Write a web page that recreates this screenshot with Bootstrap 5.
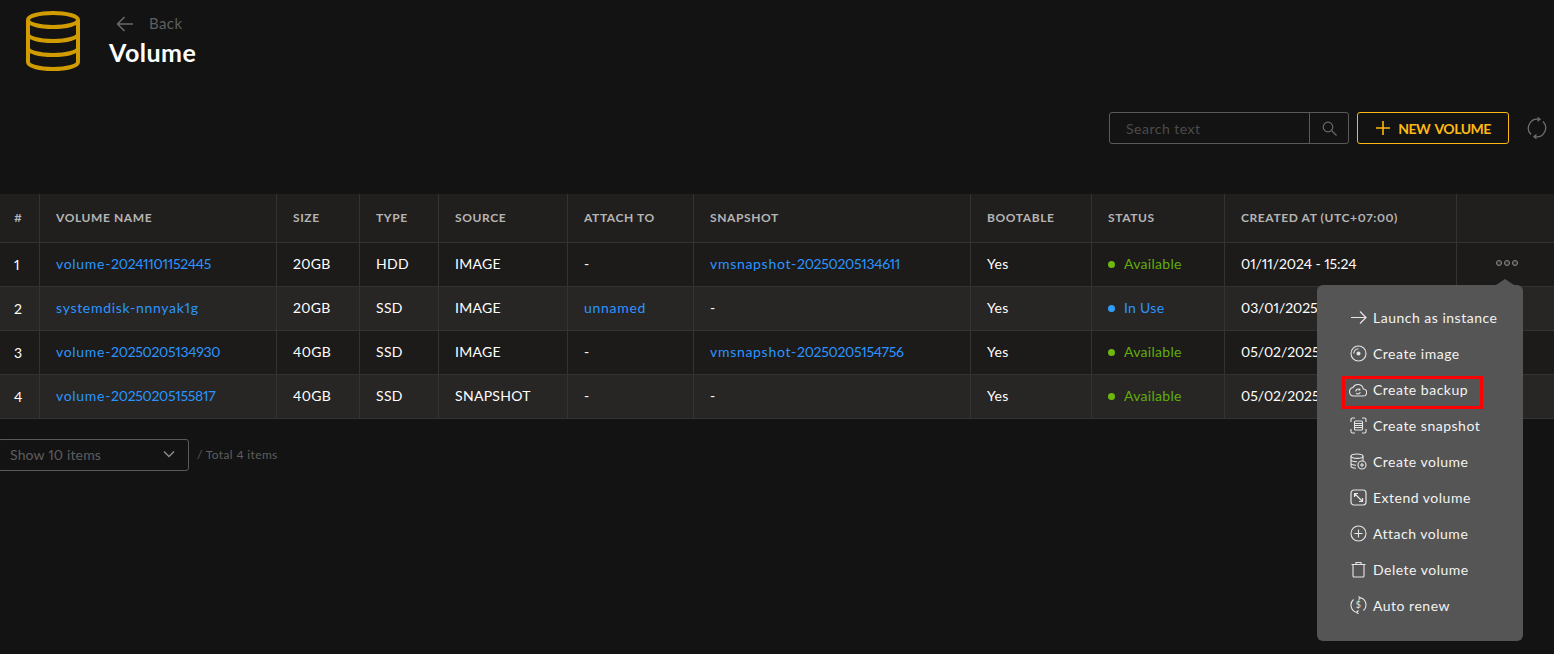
<!doctype html>
<html lang="en">
<head>
<meta charset="utf-8">
<title>Volume</title>
<link rel="stylesheet" href="https://cdn.jsdelivr.net/npm/bootstrap@5.3.0/dist/css/bootstrap.min.css">
<style>
html,body{height:100%;overflow:hidden}
body{background:#131313;color:#fff;font-family:"Lato","Noto Sans",sans-serif;font-size:14px;font-variant-numeric:proportional-nums}
.pg-head{height:194px}
.top-row{padding:11px 0 0 26px;gap:29px}
.back-row{height:25px;margin-left:7px;gap:15px;color:#5e5e5e;font-size:15px;letter-spacing:.4px}
.pg-title{font-size:25px;font-weight:700;line-height:32px;margin:0 0 2px;letter-spacing:.5px}
.tools{padding:0 7px 0 0;margin-top:41px;gap:8px}
.search-box{width:240px;height:32px;border:1px solid #5a5a5a;border-radius:3px}
.search-txt{flex:1;padding-left:16px;color:#4b4b4b;font-size:14px;letter-spacing:.5px}
.search-btn{width:39px;height:100%;border-left:1px solid #5a5a5a}
.new-btn{width:152px;height:32px;border:1px solid #fdb913;border-radius:3px;color:#fdb913;font-size:14px;font-weight:700;gap:7px;padding:0;background:transparent;letter-spacing:-.5px;word-spacing:2px}
.new-btn:hover{color:#fdb913;border-color:#fdb913}
.refresh{margin-left:10px}
.vol-table{table-layout:fixed;width:1554px;margin:0;color:#fff;--bs-table-bg:transparent;--bs-table-color:#fff;border-collapse:separate;border-spacing:0}
.vol-table th{background:#211f1e;color:#b5b5b5;font-size:12px;font-weight:700;letter-spacing:.6px;height:49px;padding:0 16px 1px;border:solid #333;border-width:0 1px 1px 0;vertical-align:middle}
.vol-table td{height:44px;padding:0 16px 2px;border:solid #333;border-width:0 1px 1px 0;vertical-align:middle;font-size:14px;white-space:nowrap;letter-spacing:.3px}
.vol-table th:last-child,.vol-table td:last-child{border-right:0}
.vol-table tbody tr:nth-child(odd) td{background:#1c1b1a}
.vol-table tbody tr:nth-child(even) td{background:#272625}
.vol-table .date-cell{letter-spacing:-.08px}
.c1{width:40px}.c2{width:237px}.c3{width:83px}.c4{width:79px}.c5{width:129px}.c6{width:126px}.c7{width:277px}.c8{width:121px}.c9{width:133px}.c10{width:232px}.c11{width:97px}
.vol-table .num-cell{padding:0 0 1px 14px}
.vlink{color:#2b95ff;text-decoration:none;letter-spacing:.7px}
.dg{letter-spacing:-.3px}
.st-ok{color:#60ae0a}.st-use{color:#2b95ff}
.dotmark{display:inline-block;width:7px;height:7px;border-radius:50%;margin-right:9px;vertical-align:1px}
.dot-ok{background:#6fb80d}.dot-use{background:#2f9dfb}
.more-cell{position:relative;overflow:visible}
.more-dots{position:absolute;left:39px;top:17px;display:flex;gap:2px}
.more-dots i{width:6px;height:6px;border:1px solid #8b8b8b;border-radius:50%;display:block;box-shadow:inset 0 0 0 1px #8b8b8b55}
.act-menu{position:absolute;left:-140px;top:42px;width:206px;height:356px;background:#555;border-radius:6px;padding:14px 0 0 33px;z-index:5}
.act-menu::before{content:"";position:absolute;left:179px;top:-6px;border:solid transparent;border-width:0 9px 6px;border-bottom-color:#555}
.act-item{height:36px;gap:6px;color:#f3f3f3;font-size:14px;letter-spacing:.5px;position:relative}
.act-item svg{flex:none}
.act-item .cloud{margin-left:-1px}
.act-on::after{content:"";position:absolute;left:-8px;top:5px;width:141px;height:33px;border:3px solid #f00}
.foot-row{padding-top:20px;gap:8px}
.size-pick{width:191px;height:32px;margin-left:-2px;border:1px solid #5a5a5a;border-radius:3px;padding:0 13px 2px 11px;color:#5e5e5e;font-size:14px;letter-spacing:.15px}
.total-txt{color:#5e5e5e;font-size:12px;letter-spacing:.35px}
</style>
</head>
<body>
<header class="pg-head">
  <div class="d-flex top-row">
    <svg width="54" height="60" viewBox="0 0 54 60" fill="none" stroke="#d19c00" stroke-width="4"><ellipse cx="27" cy="9" rx="25" ry="7"/><path d="M2 9v42c0 4 11 7 25 7s25-3 25-7V9"/><path d="M2 23c0 4 11 7 25 7s25-3 25-7M2 37c0 4 11 7 25 7s25-3 25-7"/></svg>
    <div>
      <div class="d-flex align-items-center back-row">
        <svg width="18" height="16" viewBox="0 0 18 16" fill="none" stroke="#6a6a6a" stroke-width="1.500"><path d="M17 8H1.500M8.500 1 1.500 8l7 7"/></svg>
        <span>Back</span>
      </div>
      <h1 class="pg-title">Volume</h1>
    </div>
  </div>
  <div class="d-flex justify-content-end align-items-center tools">
    <div class="d-flex align-items-center search-box">
      <span class="search-txt">Search text</span>
      <span class="d-flex align-items-center justify-content-center search-btn">
        <svg width="15" height="15" viewBox="0 0 15 15" fill="none" stroke="#686868" stroke-width="1.200"><circle cx="6" cy="6" r="4.800"/><path d="m9.500 9.500 5 5"/></svg>
      </span>
    </div>
    <button type="button" class="btn d-flex align-items-center justify-content-center new-btn">
      <svg width="16" height="16" viewBox="0 0 16 16" fill="none" stroke="#fdb913" stroke-width="1.600"><path d="M8 1v14M1 8h14"/></svg>
      NEW VOLUME
    </button>
    <svg class="refresh" width="20" height="22" viewBox="0 0 20 22" fill="none" stroke="#6f6f6f" stroke-width="1.300"><path d="M4 17.500A9 9 0 0 1 12 2.300M16 4.500A9 9 0 0 1 8 19.700"/><path d="m10.500 .5 2.500 1.800-2.500 2M9.500 17.500 7 19.700l2.500 2"/></svg>
  </div>
</header>
<table class="table vol-table">
  <colgroup><col class="c1"><col class="c2"><col class="c3"><col class="c4"><col class="c5"><col class="c6"><col class="c7"><col class="c8"><col class="c9"><col class="c10"><col class="c11"></colgroup>
  <thead><tr><th class="num-cell">#</th><th>VOLUME NAME</th><th>SIZE</th><th>TYPE</th><th>SOURCE</th><th>ATTACH TO</th><th>SNAPSHOT</th><th>BOOTABLE</th><th>STATUS</th><th>CREATED AT (UTC+07:00)</th><th></th></tr></thead>
  <tbody>
    <tr><td class="num-cell">1</td><td><a class="vlink" href="#">volume-<span class="dg">20241101152445</span></a></td><td>20GB</td><td>HDD</td><td>IMAGE</td><td>-</td><td><a class="vlink" href="#">vmsnapshot-<span class="dg">20250205134611</span></a></td><td>Yes</td><td class="st-ok"><span class="dotmark dot-ok"></span>Available</td><td class="date-cell">01/11/2024 - 15:24</td>
      <td class="more-cell">
        <div class="more-dots"><i></i><i></i><i></i></div>
        <div class="act-menu">
          <div class="d-flex align-items-center act-item"><svg width="17" height="17" viewBox="0 0 17 17" fill="none" stroke="#e6e6e6" stroke-width="1.200"><path d="M1 8.500h15M10 2.500l6 6-6 6"/></svg><span>Launch as instance</span></div>
          <div class="d-flex align-items-center act-item"><svg width="17" height="17" viewBox="0 0 17 17" fill="none" stroke="#e6e6e6" stroke-width="1.100"><circle cx="8.500" cy="8.500" r="7.500"/><circle cx="8.500" cy="8.500" r="1.500" fill="#e6e6e6"/><path d="M3.800 8.500a4.700 4.700 0 0 1 4.700-4.700"/></svg><span>Create image</span></div>
          <div class="d-flex align-items-center act-item act-on"><svg class="cloud" width="18" height="17" viewBox="0 0 18 17" fill="none" stroke="#e6e6e6" stroke-width="1.100"><path d="M4.500 15h9.500a3.500 3.500 0 0 0 .3-7A5.500 5.500 0 0 0 4 6.500 4.300 4.300 0 0 0 4.500 15z"/><path d="M6.800 10.500a2.300 2.300 0 0 1 4-1.700M11.200 11a2.300 2.300 0 0 1-4 1.200M10.800 7.500v1.500H9.400"/></svg><span>Create backup</span></div>
          <div class="d-flex align-items-center act-item"><svg width="17" height="17" viewBox="0 0 17 17" fill="none" stroke="#e6e6e6" stroke-width="1.100"><path d="M1 5V2.500A1.500 1.500 0 0 1 2.500 1H5M12 1h2.500A1.500 1.500 0 0 1 16 2.500V5M16 12v2.500a1.500 1.500 0 0 1-1.500 1.500H12M5 16H2.500A1.500 1.500 0 0 1 1 14.500V12"/><rect x="4.500" y="4" width="8" height="9" rx="1"/><path d="M4.500 6.500h8M4.500 8.500h8M4.500 10.500h8"/></svg><span>Create snapshot</span></div>
          <div class="d-flex align-items-center act-item"><svg width="17" height="17" viewBox="0 0 17 17" fill="none" stroke="#e6e6e6" stroke-width="1.100"><ellipse cx="7" cy="3.200" rx="6" ry="2.200"/><path d="M1 3.200v9.800c0 1.200 2 2.200 5 2.200M13 3.200v4.800M1 6.500c0 1.200 2.500 2.200 6 2.200M1 10c0 1.200 2 2.200 5 2.200"/><circle cx="12" cy="12" r="4"/><path d="M12 10v4M10 12h4"/></svg><span>Create volume</span></div>
          <div class="d-flex align-items-center act-item"><svg width="17" height="17" viewBox="0 0 17 17" fill="none" stroke="#e6e6e6" stroke-width="1.200"><rect x="1" y="1" width="15" height="15" rx="3"/><path d="M4.500 4.500l8 8M4.500 8V4.500H8M12.500 9v3.500H9"/></svg><span>Extend volume</span></div>
          <div class="d-flex align-items-center act-item"><svg width="17" height="17" viewBox="0 0 17 17" fill="none" stroke="#e6e6e6" stroke-width="1.100"><circle cx="8.500" cy="8.500" r="7.500"/><path d="M8.500 4.500v8M4.500 8.500h8"/></svg><span>Attach volume</span></div>
          <div class="d-flex align-items-center act-item"><svg width="17" height="17" viewBox="0 0 17 17" fill="none" stroke="#e6e6e6" stroke-width="1.100"><path d="M1.500 3.500h14M6 3.500V1.500h5v2M3 3.500v11.500a1 1 0 0 0 1 1h9a1 1 0 0 0 1-1V3.500"/></svg><span>Delete volume</span></div>
          <div class="d-flex align-items-center act-item"><svg width="17" height="18" viewBox="0 0 17 18" fill="none" stroke="#e6e6e6" stroke-width="1.100"><path d="M3.500 3.500a7.500 7.500 0 0 0 3 12.800M13.500 14.500a7.500 7.500 0 0 0-3-12.800M8.500 .5l2 1.500-2 1.500M8.500 14.500l-2 1.800 2 1.500"/><text x="8.500" y="12.200" text-anchor="middle" font-size="9" font-family="Lato" fill="#e6e6e6" stroke="none">$</text></svg><span>Auto renew</span></div>
        </div>
      </td></tr>
    <tr><td class="num-cell">2</td><td><a class="vlink" href="#">systemdisk-nnnyak1g</a></td><td>20GB</td><td>SSD</td><td>IMAGE</td><td><a class="vlink" href="#">unnamed</a></td><td>-</td><td>Yes</td><td class="st-use"><span class="dotmark dot-use"></span>In Use</td><td class="date-cell">03/01/2025 - 10:12</td><td></td></tr>
    <tr><td class="num-cell">3</td><td><a class="vlink" href="#">volume-<span class="dg">20250205134930</span></a></td><td>40GB</td><td>SSD</td><td>IMAGE</td><td>-</td><td><a class="vlink" href="#">vmsnapshot-<span class="dg">20250205154756</span></a></td><td>Yes</td><td class="st-ok"><span class="dotmark dot-ok"></span>Available</td><td class="date-cell">05/02/2025 - 13:49</td><td></td></tr>
    <tr><td class="num-cell">4</td><td><a class="vlink" href="#">volume-<span class="dg">20250205155817</span></a></td><td>40GB</td><td>SSD</td><td>SNAPSHOT</td><td>-</td><td>-</td><td>Yes</td><td class="st-ok"><span class="dotmark dot-ok"></span>Available</td><td class="date-cell">05/02/2025 - 15:58</td><td></td></tr>
  </tbody>
</table>
<div class="d-flex align-items-center foot-row">
  <div class="d-flex align-items-center justify-content-between size-pick">
    <span>Show 10 items</span>
    <svg width="12" height="8" viewBox="0 0 12 8" fill="none" stroke="#8a8a8a" stroke-width="1.500"><path d="m1 1.500 5 5 5-5"/></svg>
  </div>
  <span class="total-txt">/ Total 4 items</span>
</div>
<script src="https://cdn.jsdelivr.net/npm/bootstrap@5.3.0/dist/js/bootstrap.bundle.min.js"></script>
</body>
</html>
